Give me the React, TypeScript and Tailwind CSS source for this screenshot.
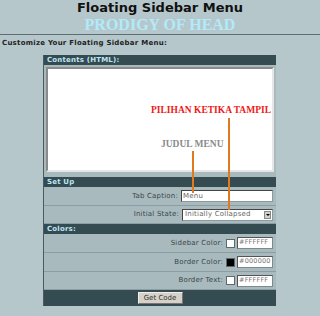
import React from "react";

const sans = { fontFamily: '"DejaVu Sans", Verdana, sans-serif' };
const serif = { fontFamily: '"Liberation Serif", "Times New Roman", serif' };

const Header: React.FC<{ label: string }> = ({ label }) => (
  <div className="h-[10px] bg-[#344b51] pl-[3px] text-[7px] font-bold leading-[10px] tracking-[0.2px] text-[#bfe6f4]">
    {label}
  </div>
);

const Row: React.FC<{ label: string; children: React.ReactNode; h?: string }> = ({
  label,
  children,
  h = "h-[19px]",
}) => (
  <div
    className={`${h} flex items-center justify-end gap-[3px] border-b border-[#8d9ea2] pr-[3px] text-[7px] tracking-[0.2px] text-[#3a4648]`}
  >
    <span>{label}</span>
    {children}
  </div>
);

const ColorField: React.FC<{ swatch: string; value: string }> = ({ swatch, value }) => (
  <div className="flex items-center gap-[2px]">
    <div className={`h-[9px] w-[9px] border border-[#5a6a6e] ${swatch}`} />
    <div className="flex h-[12px] w-[36px] items-center overflow-hidden whitespace-nowrap border border-[#7b8a8e] border-t-[#555] border-l-[#555] bg-white pl-[1px] text-[6.5px] text-[#777]">
      {value}
    </div>
  </div>
);

const App: React.FC = () => {
  return (
    <div className="h-[316px] w-[320px] overflow-hidden bg-[#b5c7cb]" style={sans}>
      {/* Title */}
      <div className="text-center text-[13px] font-bold leading-[16px] text-[#111]">
        Floating Sidebar Menu
      </div>
      <div
        className="text-center text-[16px] font-bold leading-[17px] text-[#b3eafa]"
        style={serif}
      >
        PRODIGY OF HEAD
      </div>
      <div className="mt-[1px] h-[1px] bg-[#5e6e72]" />
      <div className="mt-[4px] pl-[2px] text-[7px] font-bold leading-[8px] tracking-[0.25px] text-[#222]">
        Customize Your Floating Sidebar Menu:
      </div>

      {/* Form table */}
      <div className="relative ml-[43px] mt-[8px] w-[233px] border-l border-[#4a5a5e] bg-[#a9babe]">
        <Header label="Contents (HTML):" />
        <div className="h-[112px] px-[2px] pt-[2px]">
          <div className="h-[105px] border-2 border-[#8a8a8a] border-b-[#e6e6e6] border-r-[#e6e6e6] bg-white" />
        </div>

        <Header label="Set Up" />
        <Row label="Tab Caption:">
          <div className="flex h-[12px] w-[92px] items-center border border-[#8a9a9e] border-t-[#444] border-l-[#444] bg-white pl-[1px] text-[7px] text-[#666]">
            Menu
          </div>
        </Row>
        <Row label="Initial State:" h="h-[18px]">
          <div className="flex h-[12px] w-[91px] items-center justify-between border border-[#8a9a9e] border-t-[#444] border-l-[#444] bg-white pl-[2px] text-[7px] text-[#666]">
            <span>Initially Collapsed</span>
            <div className="mr-[1px] flex h-[8px] w-[7px] items-center justify-center border border-[#888] bg-[#d4d0c8]">
              <div className="h-0 w-0 border-x-[2px] border-t-[2px] border-x-transparent border-t-black" />
            </div>
          </div>
        </Row>

        <Header label="Colors:" />
        <Row label="Sidebar Color:">
          <ColorField swatch="bg-white" value="#FFFFFF" />
        </Row>
        <Row label="Border Color:">
          <ColorField swatch="bg-black" value="#000000" />
        </Row>
        <Row label="Border Text:" h="h-[18px]">
          <ColorField swatch="bg-white" value="#FFFFFF" />
        </Row>

        <div className="flex h-[16px] items-center justify-center bg-[#344b51]">
          <button className="h-[12px] w-[45px] border border-[#777] border-t-[#eee] border-l-[#eee] bg-[#d6d2ca] text-[7px] leading-[10px] text-[#333]">
            Get Code
          </button>
        </div>

        {/* Annotations */}
        <div
          className="absolute left-[107px] top-[50px] text-[9.5px] font-bold leading-[11px] whitespace-nowrap text-[#f01818]"
          style={serif}
        >
          PILIHAN KETIKA TAMPIL
        </div>
        <div
          className="absolute left-[117px] top-[84px] text-[9.5px] font-bold leading-[11px] whitespace-nowrap text-[#8a8a8a]"
          style={serif}
        >
          JUDUL MENU
        </div>
        <div className="absolute left-[148px] top-[96px] h-[42px] w-[2px] bg-[#e07a20]" />
        <div className="absolute left-[184px] top-[63px] h-[92px] w-[2px] bg-[#e07a20]" />
      </div>
    </div>
  );
};

export default App;
